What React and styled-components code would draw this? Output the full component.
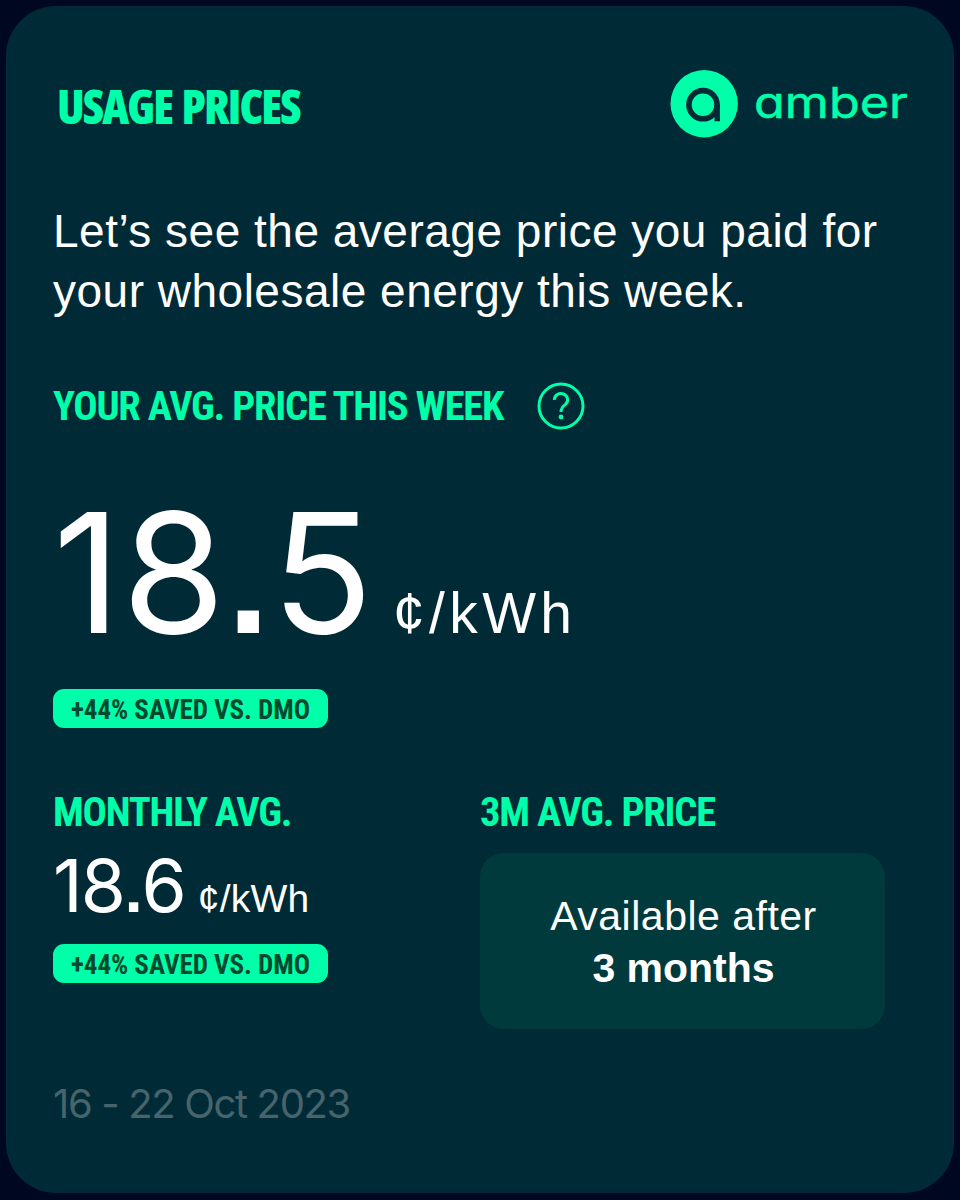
import React from 'react'
import styled, { createGlobalStyle } from 'styled-components'

const mint = '#00ffa9'
const cardColor = '#002b36'
const condensed = `'Roboto Condensed', Roboto, sans-serif`

const GlobalStyle = createGlobalStyle`
  * {
    box-sizing: border-box;
  }

  body {
    margin: 0;
    background: #000720;
    font-family: 'Liberation Sans', Arial, sans-serif;
    color: #ffffff;
  }
`

const Root = styled.div`
  height: 1200px;
  padding: 6px 6px 7px;
`

const Card = styled.div`
  display: flex;
  flex-direction: column;
  align-items: flex-start;
  height: 1187px;
  padding: 64px 47px 0;
  border-radius: 50px;
  background: ${cardColor};
`

const Header = styled.div`
  display: flex;
  justify-content: space-between;
  width: 100%;
  height: 68px;
`

const Heading = styled.div`
  font-family: ${condensed};
  font-stretch: 75%;
  font-weight: 700;
  font-size: 40.5px;
  line-height: 40px;
  letter-spacing: -1.2px;
  white-space: nowrap;
  color: ${mint};
`

const Title = styled(Heading)`
  padding: 16px 0 0 4px;
  font-family: 'Open Sans', sans-serif;
  font-weight: 800;
  font-size: 47px;
  letter-spacing: -1.9px;
  word-spacing: 3px;
`

const Intro = styled.div`
  margin-top: 63px;
  font-size: 46px;
  line-height: 60px;
  letter-spacing: 0.5px;
  white-space: nowrap;
`

const WeekRow = styled.div`
  display: flex;
  align-items: center;
  gap: 34px;
  height: 48px;
  margin-top: 61px;
`

const Price = styled.div`
  display: flex;
  align-items: baseline;
  white-space: nowrap;
  gap: ${({ $large }) => ($large ? 19 : 13)}px;
  height: ${({ $large }) => ($large ? 172 : 74)}px;
  margin-top: ${({ $large }) => ($large ? 56 : 17)}px;
  line-height: ${({ $large }) => ($large ? 172 : 74)}px;
`

const Amount = styled.span`
  font-family: Inter, sans-serif;
  font-size: ${({ $large }) => ($large ? 167 : 73)}px;
  letter-spacing: ${({ $large }) => ($large ? 1 : -1.9)}px;
`

// square decimal point, Inter only has a round one
const Point = styled.span`
  margin: 0 0.008em;
  font-family: 'Liberation Sans', Arial, sans-serif;
  font-weight: bold;
  font-size: 0.9em;
  line-height: 1;
`

const Unit = styled.span`
  font-size: ${({ $large }) => ($large ? 57 : 39)}px;
  letter-spacing: ${({ $large }) => ($large ? 4.4 : 0.2)}px;
`

const Badge = styled.div`
  display: flex;
  align-items: center;
  justify-content: center;
  width: 275px;
  height: 39px;
  margin-top: ${({ $gap }) => $gap}px;
  padding-top: 2px;
  border-radius: 11px;
  background: ${mint};
  font-family: ${condensed};
  font-stretch: 75%;
  font-weight: 700;
  font-size: 27px;
  letter-spacing: -0.05px;
  white-space: nowrap;
  color: #00492f;
`

const Columns = styled.div`
  display: grid;
  grid-template-columns: 427px 405px;
  margin-top: 64px;
`

const Pending = styled.div`
  display: flex;
  flex-direction: column;
  align-items: center;
  height: 176px;
  margin-top: 21px;
  padding: 37px 0 0 2px;
  border-radius: 24px;
  background: #003a3c;
  font-size: 41px;
  line-height: 52px;
  letter-spacing: 0.5px;

  b {
    letter-spacing: 0;
  }
`

const Period = styled.div`
  margin-top: 53px;
  font-family: Inter, sans-serif;
  font-size: 40px;
  line-height: 44px;
  letter-spacing: -1.35px;
  color: #47646c;
`

const AmberLogo = () => (
  <svg width="237" height="68" viewBox="0 0 237 68">
    <circle cx="34.2" cy="33.7" r="33.7" fill={mint} />
    <circle cx="33" cy="34.7" r="14.1" fill="none" stroke={cardColor} strokeWidth="5.6" />
    <path d="M47.2 34.7V51.2M50 48.5H44.5" fill="none" stroke={cardColor} strokeWidth="5.4" />
    <text
      x="84"
      y="47.5"
      textLength="154"
      lengthAdjust="spacingAndGlyphs"
      fill={mint}
      stroke={mint}
      strokeWidth="0.5"
      fontFamily="Inter, sans-serif"
      fontSize="43"
      style={{ fontFeatureSettings: "'cv11'" }}
    >
      amber
    </text>
  </svg>
)

const HelpIcon = () => (
  <svg width="48" height="48" viewBox="0 0 48 48" fill="none" stroke={mint}>
    <circle cx="24" cy="24" r="22" strokeWidth="3" />
    <path d="M17.4 17.9a6.6 6.3 0 1 1 10.8 4.7c-2.6 1.9-4.2 3.2-4.2 7.4" strokeWidth="3" />
    <circle cx="24" cy="35" r="2.4" fill={mint} stroke="none" />
  </svg>
)

const App = () => {
  return (
    <Root>
      <GlobalStyle />
      <Card>
        <Header>
          <Title>USAGE PRICES</Title>
          <AmberLogo />
        </Header>
        <Intro>
          Let’s see the average price you paid for
          <br />
          your wholesale energy this week.
        </Intro>
        <WeekRow>
          <Heading>YOUR AVG. PRICE THIS WEEK</Heading>
          <HelpIcon />
        </WeekRow>
        <Price $large>
          <Amount $large>18<Point>.</Point>5</Amount>
          <Unit $large>¢/kWh</Unit>
        </Price>
        <Badge $gap={31}>+44% SAVED VS. DMO</Badge>
        <Columns>
          <div>
            <Heading>MONTHLY AVG.</Heading>
            <Price>
              <Amount>18<Point>.</Point>6</Amount>
              <Unit>¢/kWh</Unit>
            </Price>
            <Badge $gap={21}>+44% SAVED VS. DMO</Badge>
          </div>
          <div>
            <Heading>3M AVG. PRICE</Heading>
            <Pending>
              <span>Available after</span>
              <b>3 months</b>
            </Pending>
          </div>
        </Columns>
        <Period>16 - 22 Oct 2023</Period>
      </Card>
    </Root>
  )
}

export default App
